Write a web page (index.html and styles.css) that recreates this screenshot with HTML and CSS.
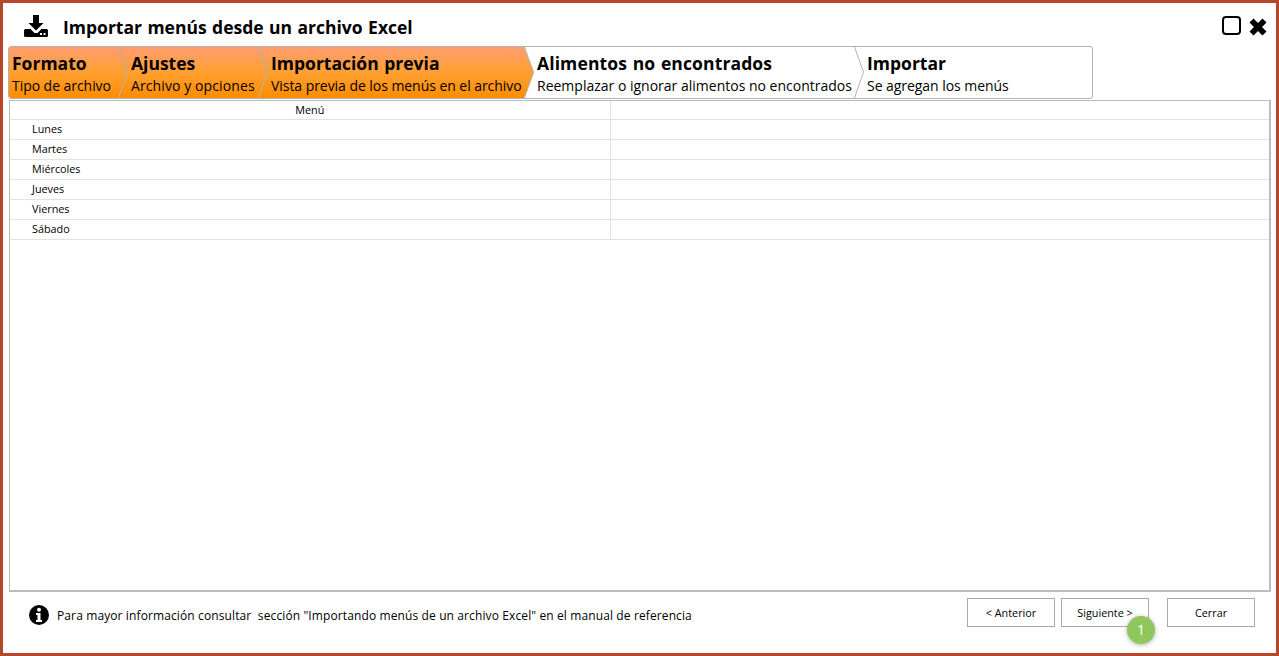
FILE: index.html
```html
<!DOCTYPE html>
<html lang="es">
<head>
<meta charset="utf-8">
<title>Importar menús desde un archivo Excel</title>
<link rel="stylesheet" href="styles.css">
</head>
<body>
<div class="frame">
  <header class="titlebar">
    <svg class="title-icon" viewBox="0 0 24 22" aria-hidden="true">
      <path d="M9 0h6v8h4.500L12 15.500 4.500 8H9z"/>
      <path d="M1.500 14h5l4 4h3l4-4h5q1.500 0 1.500 1.500v5q0 1.500-1.500 1.500h-21Q0 22 0 20.500v-5Q0 14 1.500 14z"/>
      <rect x="16" y="18" width="2" height="2" fill="#fff"/>
      <rect x="19.500" y="18" width="2" height="2" fill="#fff"/>
    </svg>
    <h1 class="title">Importar menús desde un archivo Excel</h1>
    <div class="window-controls">
      <svg class="ctl-max" viewBox="0 0 19 19" aria-hidden="true"><rect x="1" y="1" width="17" height="17" rx="3"/></svg>
      <svg class="ctl-close" viewBox="0 0 18 18" aria-hidden="true"><path d="M4.500 0.500 9 5l4.500-4.500 4 4L13 9l4.500 4.500-4 4L9 13l-4.500 4.500-4-4L5 9 0.500 4.500z"/></svg>
    </div>
  </header>

  <nav class="wizard">
    <div class="step done step-a"><b>Formato</b><span>Tipo de archivo</span><svg class="chev" viewBox="0 0 10 51" preserveAspectRatio="none"><polyline points="0.500,0 9.500,25 0.500,51"/></svg></div>
    <div class="step done step-b"><b>Ajustes</b><span>Archivo y opciones</span><svg class="chev" viewBox="0 0 10 51" preserveAspectRatio="none"><polyline points="0.500,0 9.500,25 0.500,51"/></svg></div>
    <div class="step done step-c"><b>Importación previa</b><span>Vista previa de los menús en el archivo</span><svg class="chev" viewBox="0 0 10 51" preserveAspectRatio="none"><polyline points="0.500,0 9.500,25 0.500,51"/></svg></div>
    <div class="step step-d"><b>Alimentos no encontrados</b><span>Reemplazar o ignorar alimentos no encontrados</span><svg class="chev" viewBox="0 0 10 51" preserveAspectRatio="none"><polyline points="0.500,0 9.500,25 0.500,51"/></svg></div>
    <div class="step step-e"><b>Importar</b><span>Se agregan los menús</span></div>
  </nav>

  <section class="panel">
    <table class="grid">
      <thead>
        <tr><th>Menú</th><th></th></tr>
      </thead>
      <tbody>
        <tr><td>Lunes</td><td></td></tr>
        <tr><td>Martes</td><td></td></tr>
        <tr><td>Miércoles</td><td></td></tr>
        <tr><td>Jueves</td><td></td></tr>
        <tr><td>Viernes</td><td></td></tr>
        <tr><td>Sábado</td><td></td></tr>
      </tbody>
    </table>
  </section>

  <footer class="footer">
    <svg class="info-icon" viewBox="0 0 20 20" aria-hidden="true">
      <circle cx="10" cy="10" r="10"/>
      <circle cx="10" cy="4.800" r="2" fill="#fff"/>
      <path d="M7 8h4.500v7H13v2H7v-2h1.500v-5H7z" fill="#fff"/>
    </svg>
    <p class="note">Para mayor información consultar&nbsp; sección "Importando menús de un archivo Excel" en el manual de referencia</p>
    <div class="actions">
      <button class="btn" type="button">&lt; Anterior</button>
      <div class="btn-wrap">
        <button class="btn" type="button">Siguiente &gt;</button>
        <span class="badge">1</span>
      </div>
      <button class="btn btn-close" type="button">Cerrar</button>
    </div>
  </footer>
</div>
</body>
</html>
```
FILE: styles.css
```css
* { box-sizing: border-box; }
html, body { margin: 0; padding: 0; height: 100%; background: #fff; overflow: hidden; }
body { font-family: "Open Sans", "Noto Sans", "Liberation Sans", sans-serif; color: #000; }

.frame {
  width: 1279px;
  height: 656px;
  border: 3px solid #b7472a;
  display: flex;
  flex-direction: column;
  background: #fff;
}

.titlebar {
  height: 43px;
  flex: none;
  display: flex;
  align-items: center;
  padding: 0 9px 0 21px;
}
.title-icon { width: 24px; height: 22px; fill: #000; flex: none; margin-top: 3px; }
.title {
  margin: 4px 0 0 15px;
  font-size: 17.500px;
  font-weight: 700;
  line-height: 24px;
  word-spacing: 0.900px;
  white-space: nowrap;
}
.window-controls { margin-left: auto; display: flex; align-items: center; gap: 8px; margin-top: 3px; }
.ctl-max { width: 19px; height: 19px; fill: none; stroke: #000; stroke-width: 2; margin-top: -2px; }
.ctl-close { width: 18px; height: 18px; fill: #000; margin-top: 2px; }

.wizard {
  flex: none;
  width: 1085px;
  height: 53px;
  margin-left: 5px;
  border: 1px solid #b2b2b2;
  border-radius: 3px;
  display: grid;
  grid-template-columns: 109px 140px 266px 330px 1fr;
  background: #fff;
}
.step {
  position: relative;
  padding-left: 13px;
  display: flex;
  flex-direction: column;
  white-space: nowrap;
}
.step-a { padding-left: 3px; border-radius: 2px 0 0 2px; }
.step b { font-size: 17.500px; font-weight: 700; line-height: 24px; margin-top: 4px; word-spacing: 1px; }
.step span { font-size: 14px; line-height: 19px; margin-top: 1px; letter-spacing: -0.050px; }
.step-b span { letter-spacing: 0.100px; }
.step-d b { letter-spacing: 0.120px; }
.step-d span { letter-spacing: 0; }
.done { background: linear-gradient(#ff9d70 0%, #ffa030 50%, #ff8c00 100%); }
.done::after {
  content: "";
  position: absolute;
  left: 100%;
  top: 0;
  bottom: 0;
  width: 10px;
  background: linear-gradient(#ff9d70 0%, #ffa030 50%, #ff8c00 100%);
  clip-path: polygon(0 0, 100% 50%, 0 100%);
  z-index: 1;
}
.chev {
  position: absolute;
  left: 100%;
  top: 0;
  width: 10px;
  height: 100%;
  fill: none;
  stroke: #b2b2b2;
  stroke-width: 1;
  z-index: 2;
}

.panel {
  flex: none;
  width: 1262px;
  height: 492px;
  margin: 1px 0 0 6px;
  border: 1px solid #bcbcbc;
  border-bottom-width: 2px;
  border-right-width: 2px;
  background: #fff;
}
.grid {
  width: 100%;
  border-collapse: collapse;
  table-layout: fixed;
  font-size: 10.800px;
}
.grid th, .grid td {
  height: 20px;
  padding: 0;
  border-bottom: 1px solid #e2e2e2;
  font-weight: 400;
}
.grid th { height: 18px; text-align: center; }
.grid th:first-child, .grid td:first-child { width: 600px; border-right: 1px solid #e2e2e2; }
.grid td:first-child { padding: 0 0 2px 22px; }

.footer {
  flex: 1;
  display: flex;
  align-items: flex-start;
  padding: 6px 21px 0 26px;
}
.info-icon { width: 20px; height: 20px; fill: #000; flex: none; margin-top: 7px; }
.note {
  margin: 9px 0 0 8px;
  font-size: 12px;
  line-height: 18px;
  letter-spacing: 0.115px;
  white-space: nowrap;
}
.actions { margin-left: auto; display: flex; gap: 6px; }
.btn {
  width: 88px;
  height: 29px;
  padding: 0;
  background: #fff;
  border: 1px solid #aaa;
  border-radius: 0;
  font: inherit;
  font-size: 10.800px;
  color: #000;
}
.btn-wrap { position: relative; }
.btn-close { margin-left: 12px; }
.badge {
  position: absolute;
  left: 66px;
  top: 18px;
  width: 28px;
  height: 28px;
  border-radius: 50%;
  background: #8fc75c;
  color: #fff;
  font-size: 14px;
  line-height: 28px;
  text-align: center;
  box-shadow: 0 1px 5px rgba(0, 0, 0, .3);
}
```
